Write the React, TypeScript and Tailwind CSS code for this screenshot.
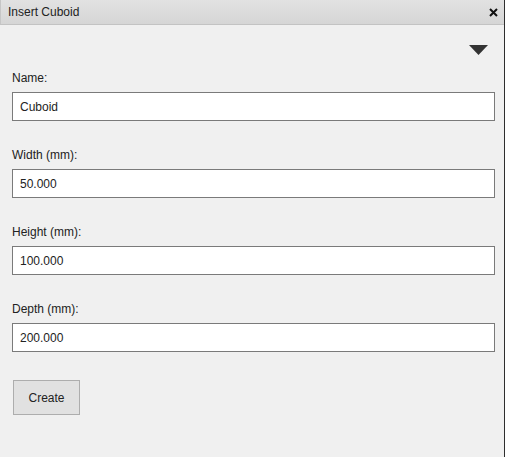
import React from 'react';

// 插入长方体面板
const FIELDS = [
  { label: 'Name:', value: 'Cuboid' },
  { label: 'Width (mm):', value: '50.000' },
  { label: 'Height (mm):', value: '100.000' },
  { label: 'Depth (mm):', value: '200.000' },
];

export default function App() {
  return (
    <div className="w-[505px] h-[457px] bg-[#f0f0f0] border-r border-[#2e2e2e] flex flex-col text-[12px] text-[#222] font-['Liberation_Sans',Arial,sans-serif] overflow-hidden">
      {/* 标题栏 */}
      <div className="h-[25px] shrink-0 flex items-center justify-between pl-[7px] pr-[5px] bg-gradient-to-b from-[#e2e2e2] to-[#d6d6d6] border-b border-[#c3c3c3] border-l border-l-[#c6c6c6]">
        <span>Insert Cuboid</span>
        <svg width="9" height="9" viewBox="0 0 9 9" className="mr-[1px]">
          <path d="M1 1 L8 8 M8 1 L1 8" stroke="#111" strokeWidth="2" />
        </svg>
      </div>

      <div className="flex flex-col px-[12px] pr-[9px]">
        <div className="flex justify-end mt-[20px] pr-[7px]">
          <svg width="19" height="10" viewBox="0 0 19 10">
            <polygon points="0,0 19,0 9.5,10" fill="#333" />
          </svg>
        </div>

        {FIELDS.map((f, i) => (
          <div key={f.label} className={i === 0 ? 'mt-[16px]' : 'mt-[27px]'}>
            <div className="h-[14px] leading-[14px] mb-[7px]">{f.label}</div>
            <input
              defaultValue={f.value}
              className="w-[483px] h-[29px] bg-white border border-[#7a7a7a] px-[7px] text-[12px] text-[#222] outline-none"
            />
          </div>
        ))}

        <div className="mt-[28px] pl-[1px]">
          <button className="w-[67px] h-[35px] bg-[#e1e1e1] border border-[#adadad] text-[12px] text-[#222]">
            Create
          </button>
        </div>
      </div>
    </div>
  );
}
